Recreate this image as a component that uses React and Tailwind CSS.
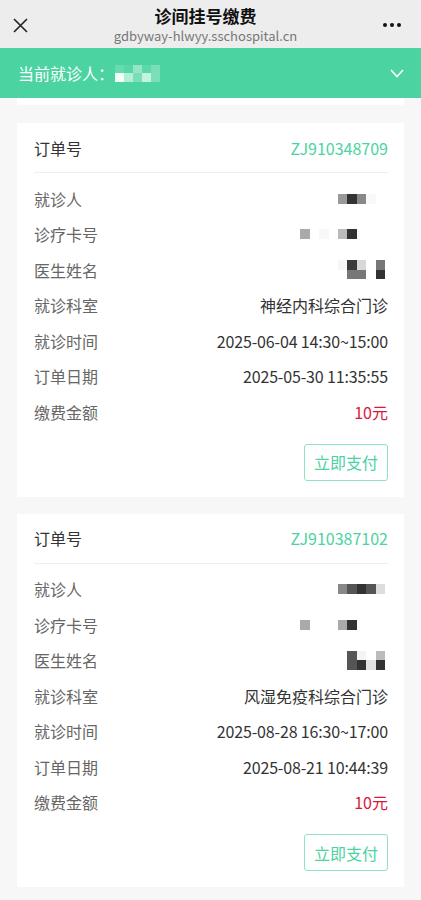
import React from 'react';

const font = { fontFamily: '"Noto Sans CJK SC", "Noto Sans", sans-serif' };

// pixelated (redacted) blocks, each row is a list of tailwind bg classes
function Mosaic({ rows, h = 'h-[10px]' }) {
  return (
    <div className="flex flex-col mr-[3px]">
      {rows.map((row, i) => (
        <div key={i} className="flex">
          {row.map((c, j) => (
            <div key={j} className={`w-[9.4px] ${h} ${c}`} />
          ))}
        </div>
      ))}
    </div>
  );
}

const orders = [
  {
    no: 'ZJ910348709',
    patient: [['bg-[#999]', 'bg-[#333]', 'bg-[#888]', 'bg-[#f8f8f8]', 'bg-transparent']],
    card: [['bg-[#aaa]', 'bg-transparent', 'bg-[#f8f8f8]', 'bg-transparent', 'bg-[#bbb]', 'bg-[#333]', 'bg-transparent', 'bg-transparent', 'bg-transparent']],
    doctor: [
      ['bg-[#f6f6f6]', 'bg-[#3a3a3a]', 'bg-[#d8d8d8]', 'bg-transparent', 'bg-[#777]'],
      ['bg-transparent', 'bg-[#777]', 'bg-[#777]', 'bg-transparent', 'bg-[#333]'],
    ],
    dept: '神经内科综合门诊',
    time: '2025-06-04 14:30~15:00',
    date: '2025-05-30 11:35:55',
  },
  {
    no: 'ZJ910387102',
    patient: [['bg-[#888]', 'bg-[#555]', 'bg-[#333]', 'bg-[#555]', 'bg-[#ddd]']],
    card: [['bg-[#aaa]', 'bg-transparent', 'bg-transparent', 'bg-transparent', 'bg-[#aaa]', 'bg-[#333]', 'bg-transparent', 'bg-transparent', 'bg-transparent']],
    doctor: [
      ['bg-transparent', 'bg-[#555]', 'bg-[#f4f4f4]', 'bg-transparent', 'bg-[#bbb]'],
      ['bg-transparent', 'bg-[#555]', 'bg-[#333]', 'bg-[#e2e2e2]', 'bg-[#333]'],
    ],
    dept: '风湿免疫科综合门诊',
    time: '2025-08-28 16:30~17:00',
    date: '2025-08-21 10:44:39',
  },
];

function Row({ label, children }) {
  return (
    <div className="h-[35.5px] flex items-center justify-between">
      <span className="text-[16px] text-[#666]">{label}</span>
      {children}
    </div>
  );
}

function OrderCard({ o }) {
  return (
    <div className="bg-white mx-[17px] pl-[17px] pr-[16px] pb-[16px]">
      <div className="h-[50px] flex items-center justify-between border-b border-[#eeeeee]">
        <span className="text-[16px] text-[#333]">订单号</span>
        <span className="text-[16px] text-[#4cd3a1]">{o.no}</span>
      </div>
      <div className="pt-[8px]">
        <Row label="就诊人"><Mosaic rows={o.patient} /></Row>
        <Row label="诊疗卡号"><Mosaic rows={o.card} /></Row>
        <Row label="医生姓名"><Mosaic rows={o.doctor} h="h-[9.5px]" /></Row>
        <Row label="就诊科室"><span className="text-[16px] text-[#333]">{o.dept}</span></Row>
        <Row label="就诊时间"><span className="text-[16px] text-[#333] tracking-[-0.15px]">{o.time}</span></Row>
        <Row label="订单日期"><span className="text-[16px] text-[#333] tracking-[-0.15px]">{o.date}</span></Row>
        <Row label="缴费金额"><span className="text-[16px] text-[#d6193c]">10元</span></Row>
      </div>
      <div className="flex justify-end mt-[14px]">
        <button className="w-[84px] h-[37px] border border-[#8fe2c2] rounded-[3px] text-[16px] text-[#4cd3a1]">
          立即支付
        </button>
      </div>
    </div>
  );
}

export default function App() {
  return (
    <div className="w-[421px] min-h-[900px] bg-[#f7f7f7] overflow-hidden" style={font}>
      {/* title bar */}
      <div className="h-[48px] bg-[#ededed] flex items-center justify-between px-[13px]">
        <svg width="15" height="15" viewBox="0 0 15 15" className="mt-[2px]">
          <path d="M1 1 L14 14 M14 1 L1 14" stroke="#222" strokeWidth="1.6" fill="none" />
        </svg>
        <div className="flex flex-col items-center leading-none">
          <span className="text-[17px] font-semibold text-[#111] mt-[1px]">诊间挂号缴费</span>
          <span className="text-[13px] text-[#777] mt-[5px]">gdbyway-hlwyy.sschospital.cn</span>
        </div>
        <div className="flex gap-[3px] mr-[7px] mt-[1px]">
          <span className="w-[4px] h-[4px] rounded-full bg-[#111]" />
          <span className="w-[4px] h-[4px] rounded-full bg-[#111]" />
          <span className="w-[4px] h-[4px] rounded-full bg-[#111]" />
        </div>
      </div>

      {/* patient bar */}
      <div className="h-[50px] bg-[#4bd4a1] flex items-center justify-between pl-[18px] pr-[17px]">
        <div className="flex items-center">
          <span className="text-[16px] text-white">当前就诊人：</span>
          <div className="flex flex-col ml-[1px] mt-[1px]">
            <div className="flex">
              <div className="w-[9px] h-[8px] bg-[#66dbae]" />
              <div className="w-[9px] h-[8px] bg-[#55d7a6]" />
              <div className="w-[9px] h-[8px] bg-[#96e5c6]" />
              <div className="w-[9px] h-[8px] bg-[#5cd8a9]" />
              <div className="w-[9px] h-[8px] bg-[#78dfb6]" />
            </div>
            <div className="flex">
              <div className="w-[9px] h-[9px] bg-[#f2fff9]" />
              <div className="w-[9px] h-[9px] bg-[#b3eed6]" />
              <div className="w-[9px] h-[9px] bg-[#78dfb6]" />
              <div className="w-[9px] h-[9px] bg-[#c4f2df]" />
              <div className="w-[9px] h-[9px] bg-[#7be0b8]" />
            </div>
          </div>
        </div>
        <svg width="14" height="9" viewBox="0 0 14 9">
          <path d="M1 1 L7 7.5 L13 1" stroke="#fff" strokeWidth="1.6" fill="none" />
        </svg>
      </div>

      {/* previous card tail */}
      <div className="bg-white mx-[17px] h-[7px]" />

      <div className="flex flex-col gap-[17px] mt-[18px]">
        {orders.map((o) => (
          <OrderCard key={o.no} o={o} />
        ))}
      </div>
    </div>
  );
}
